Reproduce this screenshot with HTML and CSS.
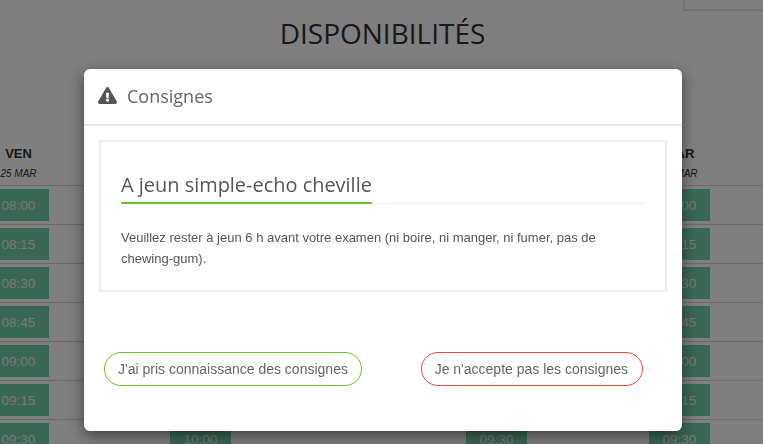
FILE: index.html
```html
<!DOCTYPE html>
<html lang="fr">
<head>
<meta charset="utf-8">
<title>Disponibilités</title>
<link rel="stylesheet" href="styles.css">
</head>
<body>
<div class="topbar"><div class="account"></div></div>
<h1 class="page-title">DISPONIBILITÉS</h1>
<div class="calendar">
  <div class="days">
    <div class="day"><strong>VEN</strong><em>25 MAR</em></div>
    <div class="day"></div>
    <div class="day"></div>
    <div class="day"><strong>MAR</strong><em>29 MAR</em></div>
  </div>
  <div class="row"><span class="slot">08:00</span><i></i><i></i><span class="slot">08:00</span></div>
  <div class="row"><span class="slot">08:15</span><i></i><i></i><span class="slot">08:15</span></div>
  <div class="row"><span class="slot">08:30</span><i></i><i></i><span class="slot">08:30</span></div>
  <div class="row"><span class="slot">08:45</span><i></i><i></i><span class="slot">08:45</span></div>
  <div class="row"><span class="slot">09:00</span><i></i><i></i><span class="slot">09:00</span></div>
  <div class="row"><span class="slot">09:15</span><i></i><i></i><span class="slot">09:15</span></div>
  <div class="row"><span class="slot">09:30</span><span class="slot">10:00</span><span class="slot">09:30</span><span class="slot">09:30</span></div>
</div>
<div class="backdrop"></div>
<div class="modal">
  <div class="modal-header">
    <svg class="warn" viewBox="0 0 576 512" aria-hidden="true"><path d="M569.517 440.013C587.975 472.007 564.806 512 527.94 512H48.054c-36.937 0-59.999-40.055-41.577-71.987L246.423 24c18.467-32.009 64.72-31.951 83.154 0l239.94 416.013zM288 354c-25.405 0-46 20.595-46 46s20.595 46 46 46 46-20.595 46-46-20.595-46-46-46zm-43.673-165.346l7.418 136c.347 6.364 5.609 11.346 11.982 11.346h48.546c6.373 0 11.635-4.982 11.982-11.346l7.418-136c.35-6.874-5.125-12.654-12-12.654h-63.383c-6.884 0-12.356 5.78-12.007 12.654z"/></svg>
    <span class="modal-title">Consignes</span>
  </div>
  <div class="modal-body">
    <div class="notice">
      <div class="notice-head"><h2>A jeun simple-echo cheville</h2></div>
      <p>Veuillez rester à jeun 6 h avant votre examen (ni boire, ni manger, ni fumer, pas de chewing-gum).</p>
    </div>
    <div class="actions">
      <button class="btn btn-ok">J'ai pris connaissance des consignes</button>
      <button class="btn btn-no">Je n'accepte pas les consignes</button>
    </div>
  </div>
</div>
</body>
</html>
```
FILE: styles.css
```css
* { box-sizing: border-box; }
html, body { margin: 0; padding: 0; height: 100%; overflow: hidden; }
body { background: #fff; font-family: "Liberation Sans", Arial, sans-serif; color: #333; }

.topbar { display: flex; justify-content: flex-end; height: 11px; }
.account { width: 80px; height: 11px; border-left: 2px solid #e8e8e8; border-bottom: 2px solid #e8e8e8; }

.page-title {
  margin: 0;
  padding: 3px 0 0 2px;
  height: 120px;
  text-align: center;
  font-family: "Open Sans", sans-serif;
  font-weight: 400;
  font-size: 28px;
  line-height: 38px;
  color: #333;
}

.days, .row { display: grid; grid-template-columns: 182px 296px 183px 61px; margin-left: -12px; width: 775px; }
.days { height: 54px; padding-top: 14px; }
.day { width: 61px; display: flex; flex-direction: column; align-items: center; white-space: nowrap; }
.day strong { font-size: 13px; line-height: 17px; color: #333; }
.day em { font-size: 10px; line-height: 13px; margin-top: 5px; color: #333; }

.row { height: 39px; border-top: 1px solid #d6d6d6; padding: 3px 0; }
.slot {
  display: block;
  width: 61px;
  height: 32px;
  background: #74d0ac;
  color: #eee;
  font-size: 13.5px;
  line-height: 33px;
  text-align: center;
}

.backdrop { position: fixed; inset: 0; background: rgba(0, 0, 0, .5); }

.modal {
  position: fixed;
  left: 84px;
  top: 69px;
  width: 598px;
  height: 362px;
  background: #fff;
  border-radius: 6px;
  box-shadow: 0 5px 15px rgba(0, 0, 0, .5);
}
.modal-header {
  display: flex;
  align-items: center;
  gap: 10px;
  height: 57px;
  padding: 0 15px 2px 14px;
  border-bottom: 2px solid #e5e5e5;
}
.warn { width: 19px; height: 17px; fill: #555; flex: none; }
.modal-title { font-family: "Open Sans", sans-serif; font-size: 18px; color: #666; }

.modal-body { padding: 14px 15px 0; }
.notice { height: 152px; border: 2px solid #eee; padding: 30px 20px 0; }
.notice-head { height: 32px; border-bottom: 1px dotted #e5e5e5; }
.notice-head h2 {
  display: inline-block;
  margin: 0;
  height: 32px;
  border-bottom: 2px solid #6fbf2c;
  font-family: "Open Sans", sans-serif;
  font-weight: 400;
  font-size: 19.95px;
  line-height: 25px;
  color: #555;
}
.notice p { margin: 23px 0 0; font-size: 13px; line-height: 21px; color: #555; }

.actions { display: flex; justify-content: space-between; padding: 60px 24px 0 5px; }
.btn {
  height: 34px;
  padding: 0 13px;
  background: #fff;
  border: 1px solid;
  border-radius: 17px;
  font-family: "Liberation Sans", Arial, sans-serif;
  font-size: 14px;
  color: #666;
}
.btn-ok { border-color: #6fbf2c; }
.btn-no { border-color: #e74c3c; padding: 0 14px 0 13px; }
```
